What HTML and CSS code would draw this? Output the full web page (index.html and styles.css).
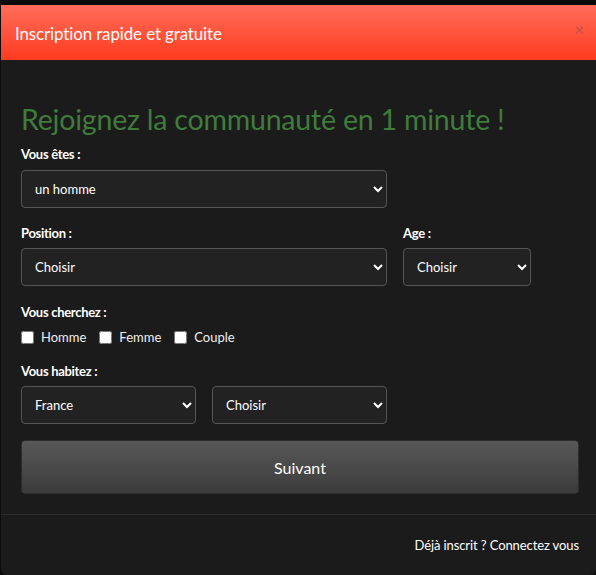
FILE: index.html
```html
<!DOCTYPE html>
<html lang="fr">

<head>
    <meta charset="UTF-8">
    <meta name="viewport" content="width=device-width, initial-scale=1.0">
    <title>Inscription</title>
    <link rel="stylesheet" href="styles.css">
</head>

<body>
    <div class="modal">
        <div class="modal-header">
            <h4 class="modal-title">Inscription rapide et gratuite</h4>
            <span class="close">&times;</span>
        </div>
        <div class="modal-body">
            <h2 class="lead">Rejoignez la communauté en 1 minute !</h2>

            <label class="lbl lbl-first">Vous êtes :</label>
            <div class="row">
                <select class="sel w-full">
                    <option>un homme</option>
                </select>
            </div>

            <div class="row row-pos">
                <div class="col">
                    <label class="lbl">Position :</label>
                    <select class="sel w-full">
                        <option>Choisir</option>
                    </select>
                </div>
                <div class="col">
                    <label class="lbl">Age :</label>
                    <select class="sel w-age">
                        <option>Choisir</option>
                    </select>
                </div>
            </div>

            <label class="lbl">Vous cherchez :</label>
            <div class="checks">
                <label class="chk"><input type="checkbox"> Homme</label>
                <label class="chk"><input type="checkbox"> Femme</label>
                <label class="chk"><input type="checkbox"> Couple</label>
            </div>

            <label class="lbl">Vous habitez :</label>
            <div class="row row-city">
                <select class="sel w-half">
                    <option>France</option>
                </select>
                <select class="sel w-half">
                    <option>Choisir</option>
                </select>
            </div>

            <button class="btn">Suivant</button>
        </div>
        <div class="modal-footer">
            <a href="#" class="login">Déjà inscrit ? Connectez vous</a>
        </div>
    </div>
</body>

</html>
```

FILE: styles.css
```css
html,
body {
    margin: 0;
    padding: 0;
    box-sizing: border-box;
}

body {
    background: #0b0b0b;
    height: 575px;
    padding-top: 5px;
    padding-left: 1px;
    font-family: Lato, "Open Sans", sans-serif;
    overflow: hidden;
}

.modal {
    background: #1b1b1b;
    border-radius: 0 0 6px 6px;
    height: 570px;
    color: #fff;
}

.modal-header {
    height: 55px;
    background: linear-gradient(#ff6d5a, #ff3b20);
    border-bottom: 2px solid #1c1c1c;
    display: flex;
    align-items: center;
    justify-content: space-between;
    padding: 0 12px 0 14px;
}

.modal-title {
    margin: 0;
    font-size: 16.9px;
    font-weight: normal;
    letter-spacing: -0.1px;
    padding-top: 1px;
}

.close {
    color: #c4504a;
    font-size: 17px;
    line-height: 1;
    margin-top: -6px;
}

.modal-body {
    padding: 41px 17px 20px 20px;
}

.lead {
    margin: 0 0 10px;
    font-size: 28.5px;
    line-height: 33px;
    font-weight: normal;
    color: #3f7c3c;
    letter-spacing: -0.2px;
}

.lbl {
    display: block;
    font-size: 13px;
    line-height: 16px;
    font-weight: bold;
    margin-bottom: 7px;
    letter-spacing: -0.3px;
}

.lbl-first {
    margin-bottom: 8px;
}

.row {
    display: flex;
    gap: 16px;
    margin-bottom: 17px;
}

.row-pos {
    margin-bottom: 18px;
}

.row-city {
    margin-bottom: 16px;
}

.sel {
    height: 38px;
    background: #222;
    color: #fff;
    border: 1px solid #555;
    border-radius: 4px;
    padding: 0 8px 0 9px;
    font-family: Lato, sans-serif;
    font-size: 13px;
    color-scheme: dark;
}

.w-full {
    width: 366px;
}

.w-age {
    width: 128px;
}

.w-half {
    width: 175px;
}

.checks {
    display: flex;
    align-items: center;
    height: 20px;
    gap: 13px;
    margin-bottom: 16px;
}

.chk {
    display: flex;
    align-items: center;
    font-size: 13px;
    line-height: 16px;
    color: #eee;
}

.chk input {
    width: 13px;
    height: 13px;
    margin: 0 7px 0 0;
    accent-color: #fff;
}

.btn {
    display: block;
    width: 558px;
    height: 54px;
    background: linear-gradient(#585858, #3b3b3b);
    border: 1px solid #2e2e2e;
    border-radius: 4px;
    color: #fff;
    font-family: Lato, sans-serif;
    font-size: 16px;
}

.modal-footer {
    border-top: 1px solid #2c2c2c;
    text-align: right;
    padding: 19px 17px 0;
}

.login {
    color: #fff;
    text-decoration: none;
    font-size: 13px;
    line-height: 16px;
    letter-spacing: -0.1px;
}
```
